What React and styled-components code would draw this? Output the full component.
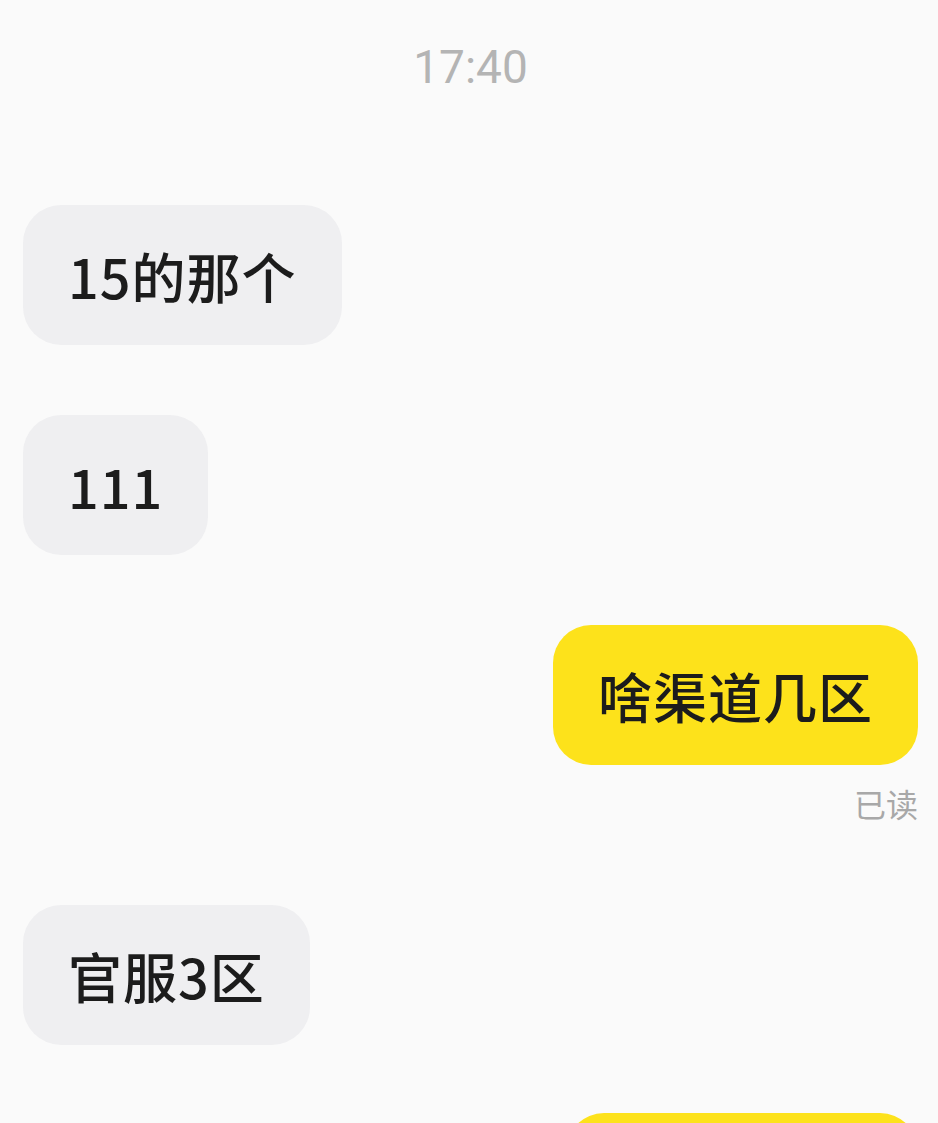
import React from "react";
import styled, { createGlobalStyle } from "styled-components";

const GlobalStyle = createGlobalStyle`
  html, body {
    margin: 0;
    padding: 0;
    height: 100%;
    overflow: hidden;
    background: #fafafa;
  }
  body {
    font-family: "Noto Sans CJK SC", "Noto Sans", Roboto, sans-serif;
  }
`;

const Screen = styled.div`
  display: flex;
  flex-direction: column;
  padding: 41px 20px 0 23px;
  min-height: 100vh;
  box-sizing: border-box;
  background: #fafafa;
`;

const Time = styled.div`
  align-self: center;
  font-family: Roboto, "Noto Sans", sans-serif;
  font-size: 46px;
  line-height: 52px;
  color: #b4b4b4;
  margin-bottom: 112px;
`;

const Row = styled.div`
  display: flex;
  justify-content: ${({ $mine }) => ($mine ? "flex-end" : "flex-start")};
  margin-top: ${({ $top }) => $top || 0}px;
`;

const Bubble = styled.div`
  display: flex;
  align-items: center;
  height: 140px;
  min-width: ${({ $minWidth }) => $minWidth || 0}px;
  box-sizing: border-box;
  padding: 0 45px;
  border-radius: 38px;
  font-size: 54px;
  font-weight: 500;
  letter-spacing: 1px;
  color: #1c1c1c;
  background: ${({ $mine }) => ($mine ? "#fde21b" : "#efeff1")};
  white-space: nowrap;
`;

const Receipt = styled.div`
  align-self: flex-end;
  margin-top: 18px;
  font-size: 32px;
  line-height: 40px;
  color: #a8a8a8;
`;

// last one is the next message, scrolled just past the bottom edge
const messages = [
  { id: 1, text: "15的那个", top: 0 },
  { id: 2, text: "111", top: 70 },
  { id: 3, text: "啥渠道几区", top: 70, mine: true, read: true },
  { id: 4, text: "官服3区", top: 82 },
  { id: 5, text: "", top: 68, mine: true, minWidth: 352 },
];

export default function App() {
  return (
    <>
      <GlobalStyle />
      <Screen>
        <Time>17:40</Time>
        {messages.map((m) => (
          <React.Fragment key={m.id}>
            <Row $mine={m.mine} $top={m.top}>
              <Bubble $mine={m.mine} $minWidth={m.minWidth}>
                {m.text}
              </Bubble>
            </Row>
            {m.read && <Receipt>已读</Receipt>}
          </React.Fragment>
        ))}
      </Screen>
    </>
  );
}
